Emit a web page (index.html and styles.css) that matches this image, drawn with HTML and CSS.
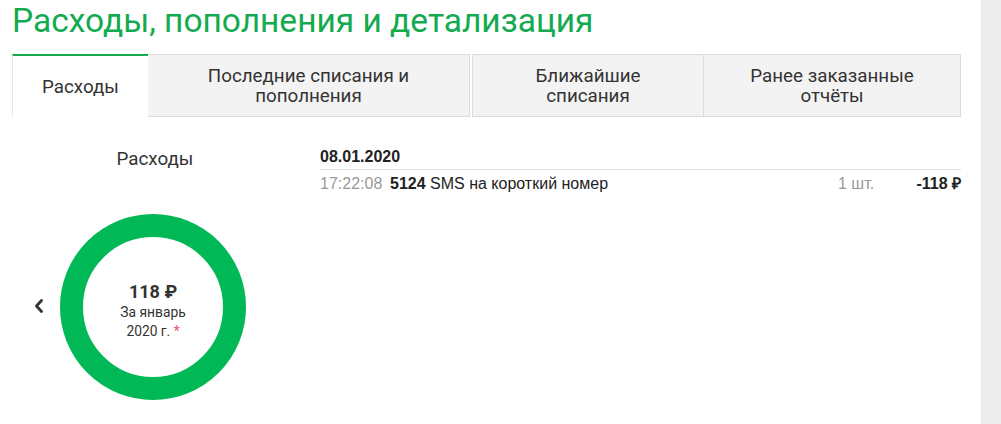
FILE: index.html
```html
<!DOCTYPE html>
<html lang="ru">
<head>
<meta charset="utf-8">
<title>Расходы, пополнения и детализация</title>
<link rel="stylesheet" href="styles.css">
</head>
<body>
<div class="page">
  <main class="main">
    <h1 class="title">Расходы, пополнения и детализация</h1>
    <nav class="tabs">
      <div class="tab tab-active">Расходы</div>
      <div class="tab tab-2">Последние списания и<br>пополнения</div>
      <div class="tab tab-3">Ближайшие<br>списания</div>
      <div class="tab tab-4">Ранее заказанные<br>отчёты</div>
    </nav>
    <section class="content">
      <div class="chart-col">
        <div class="chart-title">Расходы</div>
        <div class="chart-row">
          <button class="prev" type="button">
            <svg width="10" height="14" viewBox="0 0 10 14"><path d="M7.5 1.5 L2.5 7 L7.5 12.5" fill="none" stroke="#333" stroke-width="2.8" stroke-linecap="round" stroke-linejoin="round"/></svg>
          </button>
          <div class="ring">
            <div class="ring-sum">118 ₽</div>
            <div class="ring-label">За январь<br>2020 г. <span class="star">*</span></div>
          </div>
        </div>
      </div>
      <div class="list-col">
        <div class="day">08.01.2020</div>
        <div class="row">
          <span class="time">17:22:08</span>
          <span class="desc"><b>5124</b> SMS на короткий номер</span>
          <span class="qty">1 шт.</span>
          <span class="amount">-118 ₽</span>
        </div>
      </div>
    </section>
  </main>
  <aside class="side"></aside>
</div>
</body>
</html>
```

FILE: styles.css
```css
html, body {
  margin: 0;
  padding: 0;
  background: #fff;
}
body {
  font-family: Roboto, "Noto Sans", Arial, sans-serif;
  color: #333;
}
.page {
  display: flex;
  width: 1001px;
  height: 424px;
  overflow: hidden;
}
.main {
  width: 949px;
  padding-left: 12px;
  flex: none;
}
.side {
  margin-left: 20px;
  width: 20px;
  flex: none;
  background: #ececec;
}
.title {
  margin: 0;
  padding-top: 1px;
  height: 41px;
  line-height: 40px;
  font-size: 33.5px;
  font-weight: 400;
  color: #14aa50;
  white-space: nowrap;
  margin-bottom: 12px;
}
.tabs {
  display: flex;
  height: 63px;
}
.tab {
  box-sizing: border-box;
  display: flex;
  align-items: center;
  justify-content: center;
  text-align: center;
  font-size: 18.8px;
  line-height: 20px;
  color: #333;
  background: #f3f3f3;
  border: 1px solid #dcdcdc;
  border-left: none;
}
.tab-active {
  width: 136px;
  background: #fff;
  border: none;
  border-left: 1px solid #e6e6e6;
  border-top: 2px solid #14aa50;
}
.tab-2 { width: 322px; border-right: 1px solid #dcdcdc; }
.tab-3 { width: 232px; margin-left: 2px; border-left: 1px solid #dcdcdc; }
.tab-4 { width: 257px; }
.content {
  display: flex;
  padding-top: 31px;
}
.chart-col {
  width: 282px;
  flex: none;
}
.chart-title {
  text-align: center;
  font-size: 18.8px;
  line-height: 22px;
  color: #333;
  padding-left: 4px;
}
.chart-row {
  position: relative;
  display: flex;
  justify-content: center;
  margin-top: 44px;
}
.prev {
  position: absolute;
  left: 22px;
  top: 85px;
  width: 10px;
  height: 14px;
  padding: 0;
  border: none;
  background: none;
}
.prev svg { display: block; }
.ring {
  box-sizing: border-box;
  width: 186px;
  height: 186px;
  border-radius: 50%;
  border: 23px solid #00b956;
  display: flex;
  flex-direction: column;
  align-items: center;
  justify-content: center;
  text-align: center;
  padding-top: 8px;
}
.ring-sum {
  font-size: 18px;
  font-weight: 700;
  line-height: 22px;
  color: #333;
}
.ring-label {
  margin-top: 0;
  font-size: 13.8px;
  line-height: 19px;
  color: #333;
}
.star { color: #e8585f; }
.list-col {
  flex: 1;
  margin-left: 26px;
  font-family: "Liberation Sans", Arial, sans-serif;
  font-size: 16px;
}
.day {
  font-weight: 700;
  color: #222;
  line-height: 18px;
  padding-bottom: 3px;
  border-bottom: 1px solid #e0e0e0;
}
.row {
  display: flex;
  align-items: baseline;
  line-height: 18px;
  padding-top: 5px;
  color: #222;
}
.time {
  color: #999;
  width: 70px;
  flex: none;
}
.desc { flex: 1; }
.qty {
  color: #999;
  width: 63px;
  flex: none;
}
.amount {
  font-weight: 700;
  text-align: right;
  width: 60px;
  flex: none;
}
```
